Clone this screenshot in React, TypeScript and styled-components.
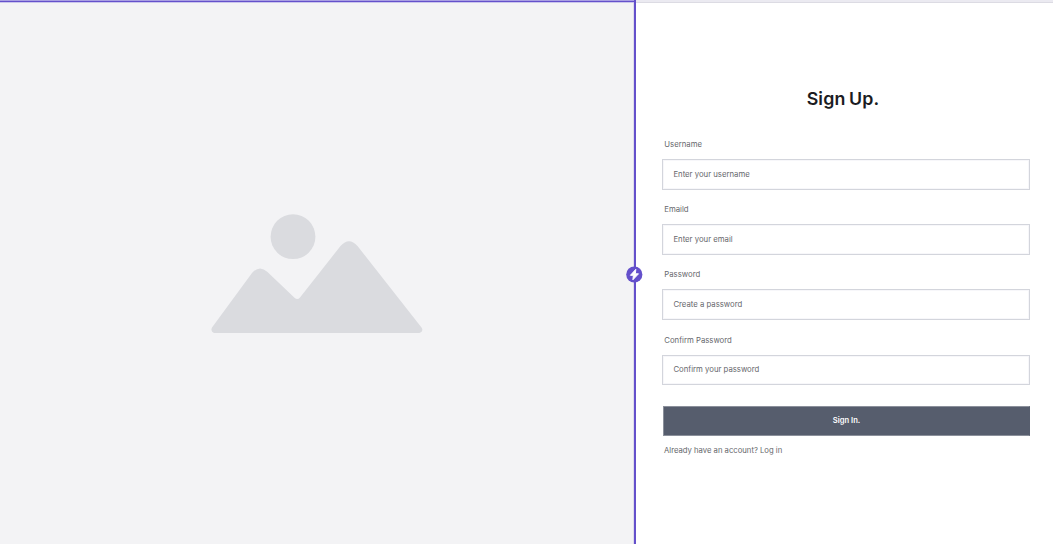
import React from 'react';
import styled, { createGlobalStyle } from 'styled-components';

const GlobalStyle = createGlobalStyle`
  * { box-sizing: border-box; }
  body { margin: 0; background: #fff; font-family: Inter, "Liberation Sans", sans-serif; }
`;

const Page = styled.main`
  display: grid;
  grid-template-columns: 636px 1fr;
  height: 544px;
  overflow: hidden;
`;

const MediaPanel = styled.section`
  position: relative;
  display: flex;
  justify-content: center;
  align-items: flex-start;
  padding: 211px 0 0 0;
  background: #f3f3f5;
  border-right: 2px solid #6450cb;
  box-shadow: inset 0 1px #a99fe2, inset 0 2px #6450cb, inset 0 3px #cbc6ec, inset -1px 0 #dedbed;
`;

const Placeholder = styled.svg`
  display: block;
  width: 214px;
  height: 126px;
`;

const Badge = styled.svg`
  position: absolute;
  right: -9px;
  top: 266px;
  width: 17px;
  height: 17px;
`;

const FormPanel = styled.section`
  display: flex;
  flex-direction: column;
  padding: 82px 23px 0 26px;
  border-top: 2px solid #ebeaf1;
  box-shadow: inset 0 1px #dcdbe3;
`;

const Title = styled.h1`
  margin: 0 0 28px;
  padding-right: 6px;
  text-align: center;
  font-size: 17.8px;
  line-height: 30px;
  font-weight: 600;
  letter-spacing: 0.15px;
  word-spacing: -1px;
  color: #1b1c22;
`;

const Field = styled.div`
  height: 65.2px;
`;

const Label = styled.div`
  height: 17px;
  padding-left: 2.3px;
  font-size: 7.75px;
  line-height: 4px;
  color: #65666b;
`;

const InputBox = styled.div`
  display: flex;
  align-items: center;
  height: 30.6px;
  padding: 0 10.4px 1px;
  border: 1px solid #d3d5dc;
  box-shadow: inset 0 0 0 1px #f7f7fa;
  font-size: 7.75px;
  color: #65666b;
`;

const SubmitButton = styled.button`
  height: 30px;
  margin: 2.8px 0 0 1px;
  padding: 0 0 1px;
  border: 1px solid #8b909b;
  border-right-color: #565d6d;
  background: #565d6d;
  color: #fff;
  font: 600 7.6px Inter, "Liberation Sans", sans-serif;
`;

const Footer = styled.p`
  margin: 9px 0 0 2px;
  font-size: 7.7px;
  line-height: 12px;
  color: #65666b;
`;

const fields = [
  { label: 'Username', hint: 'Enter your username' },
  { label: 'Emaild', hint: 'Enter your email' },
  { label: 'Password', hint: 'Create a password' },
  { label: 'Confirm Password', hint: 'Confirm your password' },
];

export default function App() {
  return (
    <>
      <GlobalStyle />
      <Page>
        <MediaPanel>
          <Placeholder viewBox="210 211 214 126" fill="#dadbdf" aria-hidden="true">
            <circle cx="293" cy="236.7" r="22.4" />
            <path d="M212 327.5 L252 273 Q259.500 264.500 267.500 272 L294.500 297.800 Q297.500 300.500 300 297.500 L340.500 246 Q349 236.500 357.500 246 L421.500 327.500 Q424 331.500 419.500 333 H214 Q210.200 331.500 212 327.500Z" />
          </Placeholder>
          <Badge viewBox="0 0 17 17" aria-hidden="true">
            <circle cx="8.300" cy="8.500" r="8.100" fill="#6450cb" />
            <path d="M9.800 3.300 L4.400 9.300 H7.400 L6.900 13.800 L12.500 7.800 H9.400 Z" fill="#fff" stroke="#fff" strokeWidth="1" strokeLinejoin="round" />
          </Badge>
        </MediaPanel>
        <FormPanel>
          <Title>Sign Up.</Title>
          {fields.map((f) => (
            <Field key={f.label}>
              <Label>{f.label}</Label>
              <InputBox>{f.hint}</InputBox>
            </Field>
          ))}
          <SubmitButton type="button">Sign In.</SubmitButton>
          <Footer>Already have an account? Log in</Footer>
        </FormPanel>
      </Page>
    </>
  );
}
